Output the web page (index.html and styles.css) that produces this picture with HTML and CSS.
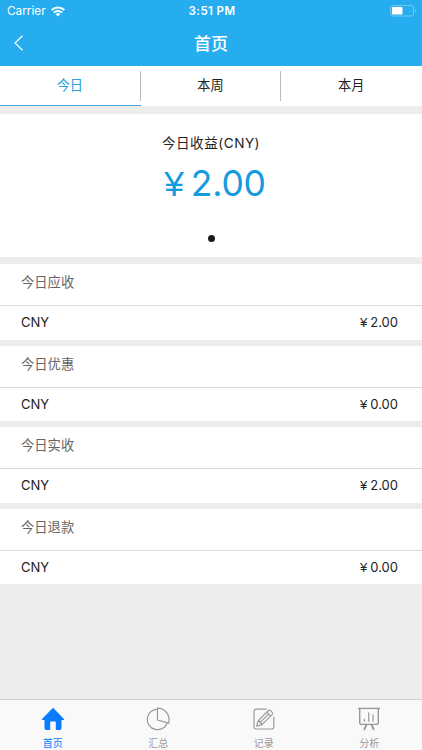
FILE: index.html
```html
<!DOCTYPE html>
<html lang="zh-CN">
<head>
  <meta charset="UTF-8">
  <meta name="viewport" content="width=device-width, initial-scale=1.0">
  <title>首页</title>
  <link rel="stylesheet" href="styles.css">
</head>
<body>
  <header class="header">
    <div class="status-bar">
      <div class="status-left">
        <span class="carrier">Carrier</span>
        <svg class="wifi" width="14" height="11" viewBox="0 0 14 11" fill="none" stroke="#fff" stroke-width="2">
          <path d="M0.7 4a9 9 0 0 1 12.6 0M2.9 6.6a5.9 5.9 0 0 1 8.2 0"/>
          <path d="M7 10.6L4.7 8.3a3.2 3.2 0 0 1 4.6 0z" fill="#fff" stroke="none"/>
        </svg>
      </div>
      <span class="time">3:51 PM</span>
      <div class="status-right">
        <svg width="27" height="12" viewBox="0 0 27 12">
          <rect x="0.5" y="0.5" width="23" height="10.5" rx="2.5" fill="none" stroke="#74c9f4"/>
          <rect x="2" y="2" width="10.5" height="7.5" rx="1" fill="#fff"/>
          <path d="M25 4v3.6q1.3-.5 1.3-1.8T25 4z" fill="#74c9f4"/>
        </svg>
      </div>
    </div>
    <div class="nav-bar">
      <a class="back" href="#">
        <svg width="10" height="16" viewBox="0 0 10 16" fill="none" stroke="#fff" stroke-width="1.2">
          <path d="M8.5 0.8L1 8l7.5 7.2"/>
        </svg>
      </a>
      <h1>首页</h1>
      <span></span>
    </div>
  </header>

  <div class="tabs">
    <a class="tab active" href="#">今日</a>
    <a class="tab" href="#">本周</a>
    <a class="tab" href="#">本月</a>
  </div>

  <main class="content">
    <section class="income">
      <div class="income-title">今日收益(CNY)</div>
      <div class="income-amount"><span class="yen">¥</span>2.00</div>
      <div class="dot"></div>
    </section>

    <section class="group">
      <h2>今日应收</h2>
      <div class="row"><span>CNY</span><span><span class="yen">¥</span>2.00</span></div>
    </section>
    <section class="group">
      <h2>今日优惠</h2>
      <div class="row"><span>CNY</span><span><span class="yen">¥</span>0.00</span></div>
    </section>
    <section class="group">
      <h2>今日实收</h2>
      <div class="row"><span>CNY</span><span><span class="yen">¥</span>2.00</span></div>
    </section>
    <section class="group">
      <h2>今日退款</h2>
      <div class="row"><span>CNY</span><span><span class="yen">¥</span>0.00</span></div>
    </section>
  </main>

  <nav class="tab-bar">
    <a class="item active" href="#">
      <svg width="24" height="24" viewBox="0 0 24 24" fill="currentColor">
        <path d="M12 0.8L0.8 12.2q-.3.8.5.8h2.2v8.3q0 1.7 1.7 1.7h4v-7.7q0-.7.7-.7h4.2q.7 0 .7.7V23h4q1.7 0 1.7-1.7V13h2.2q.8 0 .5-.8z"/>
      </svg>
      <span>首页</span>
    </a>
    <a class="item" href="#">
      <svg width="24" height="24" viewBox="0 0 24 24" fill="none" stroke="currentColor" stroke-width="1.2" stroke-linejoin="round">
        <path d="M11.5 2.1A10.3 10.3 0 1 0 21.2 16"/>
        <path d="M11.5 13V1.2A11.6 11.6 0 0 1 22.6 16.2z"/>
      </svg>
      <span>汇总</span>
    </a>
    <a class="item" href="#">
      <svg width="24" height="24" viewBox="0 0 24 24" fill="none" stroke="currentColor" stroke-width="1.2" stroke-linejoin="round" stroke-linecap="round">
        <path d="M14 2.2H4.2Q2 2.2 2 4.4v15.4Q2 22 4.2 22h15.4q2.2 0 2.2-2.2V10"/>
        <path d="M4.6 19.2l1.6-5.6L16.2 3.7q1.3-1 2.6.2l1.2 1.2q1.2 1.3.1 2.5L10 17.7zM14.8 5.1l4 4M6.2 13.6q2.8.6 3.8 4.1M7.8 15.9l8.8-8.8"/>
      </svg>
      <span>记录</span>
    </a>
    <a class="item" href="#">
      <svg width="24" height="24" viewBox="0 0 24 24" fill="none" stroke="currentColor" stroke-width="1.4">
        <path d="M1 1.4h22"/>
        <path d="M2.7 1.4v14q0 2 2 2h14.6q2 0 2-2v-14"/>
        <path d="M7.4 11.8v3M11.7 5.5v9.3M16 7.5v7.3" stroke-width="1.2"/>
        <path d="M9.6 17.6L7 23M14.4 17.6L17 23" stroke-width="1.8"/>
      </svg>
      <span>分析</span>
    </a>
  </nav>
</body>
</html>
```
FILE: styles.css
```css
* {
  box-sizing: border-box;
}
body {
  margin: 0;
  height: 100vh;
  display: flex;
  flex-direction: column;
  background: #ededed;
  color: #222;
  font-family: Inter, "Noto Sans CJK SC", sans-serif;
  font-size: 13px;
  overflow: hidden;
}
a {
  color: inherit;
  text-decoration: none;
}
.header {
  height: 66px;
  background: #25adef;
  color: #fff;
}
.status-bar {
  display: grid;
  grid-template-columns: 1fr auto 1fr;
  align-items: center;
  height: 22px;
  padding: 0 5px 0 7px;
  font-size: 12px;
}
.status-left {
  display: flex;
  align-items: center;
  gap: 5px;
}
.carrier {
  font-size: 11.8px;
  line-height: 20px;
}
.time {
  font-weight: 600;
  font-size: 11.5px;
  letter-spacing: 0.4px;
}
.status-right {
  display: flex;
  justify-content: flex-end;
}
.nav-bar {
  display: grid;
  grid-template-columns: 1fr auto 1fr;
  align-items: center;
  height: 41px;
  padding: 0 14px;
}
.back {
  display: flex;
}
h1 {
  margin: 0;
  padding-bottom: 1px;
  font-size: 17px;
  font-weight: 500;
}
.tabs {
  display: flex;
  height: 40px;
  background: #fff;
}
.tab {
  flex: 1;
  display: flex;
  align-items: center;
  justify-content: center;
  padding: 0 1px 2px 0;
  font-size: 13.2px;
  border-bottom: 1px solid transparent;
  background: linear-gradient(#bbb, #bbb) right 5px / 1px 30px no-repeat;
}
.tab:last-child {
  background: none;
}
.tab.active {
  color: #27a0dc;
  border-bottom-color: #45a9df;
}
.content {
  flex: 1;
  padding-top: 8px;
}
.income {
  height: 143px;
  padding-top: 18px;
  margin-bottom: 7px;
  background: #fff;
  text-align: center;
}
.income-title {
  font-size: 13.6px;
  line-height: 22px;
  letter-spacing: 0.5px;
}
.income-amount {
  margin-top: 8px;
  padding-left: 8px;
  color: #149be0;
  font-size: 35.5px;
  letter-spacing: -0.2px;
  line-height: 44px;
  height: 44px;
}
.yen {
  font-family: "Liberation Sans", sans-serif;
  margin-right: 0.2em;
}
.row .yen {
  margin-right: 3px;
}
.dot {
  width: 7px;
  height: 7px;
  margin: 29px auto 0;
  border-radius: 50%;
  background: #1a1a1a;
}
.group {
  height: 75.5px;
  margin-bottom: 6px;
  background: #fff;
}
.group h2 {
  margin: 0;
  height: 42px;
  padding: 0 21px;
  border-bottom: 1px solid #dcdcdc;
  color: #666;
  font-size: 13.3px;
  font-weight: 400;
  line-height: 36px;
}
.row {
  display: flex;
  justify-content: space-between;
  padding: 0 24px 0 21px;
  line-height: 33px;
}
.tab-bar {
  display: flex;
  height: 51px;
  border-top: 1px solid #cfcfcf;
  background: #f9f9f9;
}
.item {
  flex: 1;
  display: flex;
  flex-direction: column;
  align-items: center;
  padding-top: 7px;
  color: #999;
  font-size: 10px;
}
.item span {
  line-height: 14px;
  margin-top: 5px;
}
.item.active {
  color: #087bff;
}
```
